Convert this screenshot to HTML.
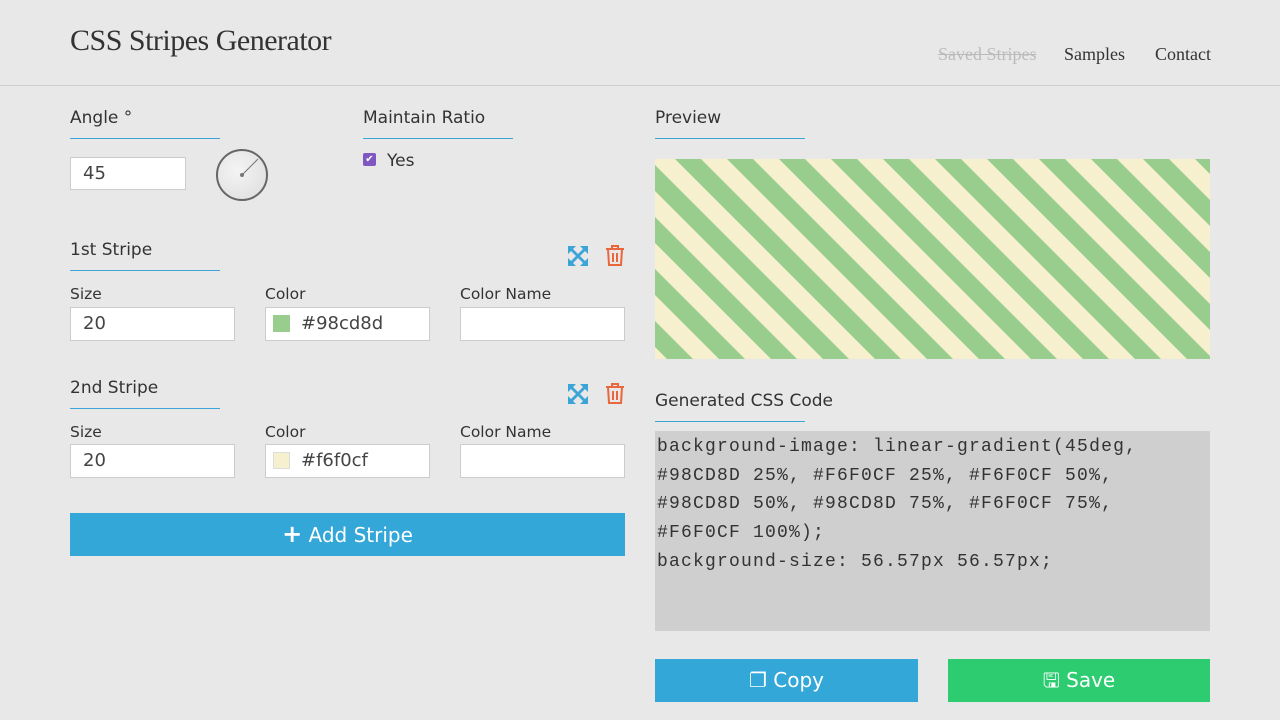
<!DOCTYPE html>
<html><head><meta charset="utf-8"><style>
*{box-sizing:border-box;margin:0;padding:0}
body{width:1280px;height:720px;background:#e8e8e8;font-family:"DejaVu Sans","Liberation Sans",sans-serif;color:#333;position:relative;overflow:hidden}
.a{position:absolute}
.hdr{left:0;top:0;width:1280px;height:86px;border-bottom:1px solid #cfcfcf}
.title{left:70px;top:24px;font-family:"Liberation Serif",serif;font-size:30px;color:#333;letter-spacing:-0.5px}
.nav{top:44px;font-family:"Liberation Serif",serif;font-size:18px;color:#333}
.lbl{font-size:17px;color:#333}
.ul{height:1px;background:#3ba5d8;width:150px}
.sm{font-size:15.5px;color:#333}
.inp{background:#fff;border:1px solid #ccc;font-size:18px;color:#444;padding-left:12px;line-height:32px;height:34px}
.btn{color:#fff;font-size:20px;text-align:center;line-height:43px;height:43px}
</style></head><body>
<div class="a hdr"></div>
<div class="a title">CSS Stripes Generator</div>
<div class="a nav" style="left:938px;color:#bbb;text-decoration:line-through">Saved Stripes</div>
<div class="a nav" style="left:1064px">Samples</div>
<div class="a nav" style="left:1155px">Contact</div>

<div class="a lbl" style="left:70px;top:108px">Angle °</div>
<div class="a ul" style="left:70px;top:138px"></div>
<div class="a inp" style="left:70px;top:157px;width:116px;height:33px">45</div>
<div class="a" style="left:216px;top:149px;width:52px;height:52px;border-radius:50%;border:2px solid #666;background:radial-gradient(circle at 40% 40%,#f4f4f4,#dcdcdc)"></div>
<svg class="a" style="left:216px;top:149px" width="52" height="52"><line x1="26" y1="26" x2="42" y2="10" stroke="#777" stroke-width="1"/><circle cx="26" cy="26" r="2" fill="#777"/></svg>

<div class="a lbl" style="left:363px;top:108px">Maintain Ratio</div>
<div class="a ul" style="left:363px;top:138px"></div>
<div class="a" style="left:363px;top:153px;width:13px;height:13px;background:#7e57c2;border-radius:2px;color:#fff;font-size:10px;line-height:13px;text-align:center">✔</div>
<div class="a lbl" style="left:387px;top:151px">Yes</div>

<div class="a lbl" style="left:70px;top:240px">1st Stripe</div>
<div class="a ul" style="left:70px;top:270px"></div>
<svg class="a" style="left:568px;top:246px" width="20" height="20" fill="#3ba5d8"><path d="M0 0h8l-3 3 5 5 5-5-3-3h8v8l-3-3-5 5 5 5 3-3v8h-8l3-3-5-5-5 5 3 3H0v-8l3 3 5-5-5-5-3 3z"/></svg>
<svg class="a" style="left:605px;top:244px" width="20" height="22" fill="none" stroke="#e8673c" stroke-width="2"><path d="M1 5h18M7 5V2h6v3M3 5l1 16h12l1-16M8 9v9M12 9v9"/></svg>
<div class="a sm" style="left:70px;top:285px">Size</div>
<div class="a sm" style="left:265px;top:285px">Color</div>
<div class="a sm" style="left:460px;top:285px">Color Name</div>
<div class="a inp" style="left:70px;top:307px;width:165px">20</div>
<div class="a inp" style="left:265px;top:307px;width:165px;padding-left:35px">#98cd8d</div>
<div class="a" style="left:273px;top:315px;width:17px;height:17px;background:#98cd8d"></div>
<div class="a inp" style="left:460px;top:307px;width:165px"></div>

<div class="a lbl" style="left:70px;top:378px">2nd Stripe</div>
<div class="a ul" style="left:70px;top:408px"></div>
<svg class="a" style="left:568px;top:384px" width="20" height="20" fill="#3ba5d8"><path d="M0 0h8l-3 3 5 5 5-5-3-3h8v8l-3-3-5 5 5 5 3-3v8h-8l3-3-5-5-5 5 3 3H0v-8l3 3 5-5-5-5-3 3z"/></svg>
<svg class="a" style="left:605px;top:382px" width="20" height="22" fill="none" stroke="#e8673c" stroke-width="2"><path d="M1 5h18M7 5V2h6v3M3 5l1 16h12l1-16M8 9v9M12 9v9"/></svg>
<div class="a sm" style="left:70px;top:423px">Size</div>
<div class="a sm" style="left:265px;top:423px">Color</div>
<div class="a sm" style="left:460px;top:423px">Color Name</div>
<div class="a inp" style="left:70px;top:444px;width:165px">20</div>
<div class="a inp" style="left:265px;top:444px;width:165px;padding-left:35px">#f6f0cf</div>
<div class="a" style="left:273px;top:452px;width:17px;height:17px;background:#f6f0cf;border:1px solid #ddd"></div>
<div class="a inp" style="left:460px;top:444px;width:165px"></div>

<div class="a btn" style="left:70px;top:513px;width:555px;background:#34a7d9"><b style="font-size:24px">+</b> Add Stripe</div>

<div class="a lbl" style="left:655px;top:108px">Preview</div>
<div class="a ul" style="left:655px;top:138px"></div>
<svg class="a" style="left:655px;top:159px" width="555" height="200">
<rect width="555" height="200" fill="#f6f0cf"/>
<g stroke="#98cd8d" stroke-width="18.4">
<line x1="-247" y1="-20" x2="-7" y2="220"/>
<line x1="-195" y1="-20" x2="45" y2="220"/>
<line x1="-143" y1="-20" x2="97" y2="220"/>
<line x1="-91" y1="-20" x2="149" y2="220"/>
<line x1="-39" y1="-20" x2="201" y2="220"/>
<line x1="13" y1="-20" x2="253" y2="220"/>
<line x1="65" y1="-20" x2="305" y2="220"/>
<line x1="117" y1="-20" x2="357" y2="220"/>
<line x1="169" y1="-20" x2="409" y2="220"/>
<line x1="221" y1="-20" x2="461" y2="220"/>
<line x1="273" y1="-20" x2="513" y2="220"/>
<line x1="325" y1="-20" x2="565" y2="220"/>
<line x1="377" y1="-20" x2="617" y2="220"/>
<line x1="429" y1="-20" x2="669" y2="220"/>
<line x1="481" y1="-20" x2="721" y2="220"/>
<line x1="533" y1="-20" x2="773" y2="220"/>
<line x1="585" y1="-20" x2="825" y2="220"/>
</g>
</svg>

<div class="a lbl" style="left:655px;top:391px">Generated CSS Code</div>
<div class="a ul" style="left:655px;top:421px"></div>
<div class="a" style="left:655px;top:431px;width:555px;height:200px;background:#cfcfcf;font-family:'Liberation Mono',monospace;font-size:18px;letter-spacing:1.2px;line-height:28.7px;color:#333;padding:2px 2px;white-space:pre">background-image: linear-gradient(45deg,
#98CD8D 25%, #F6F0CF 25%, #F6F0CF 50%,
#98CD8D 50%, #98CD8D 75%, #F6F0CF 75%,
#F6F0CF 100%);
background-size: 56.57px 56.57px;</div>

<div class="a btn" style="left:655px;top:659px;width:263px;background:#34a7d9">❐ Copy</div>
<div class="a btn" style="left:948px;top:659px;width:262px;background:#2ecc71">🖫 Save</div>
</body></html>
